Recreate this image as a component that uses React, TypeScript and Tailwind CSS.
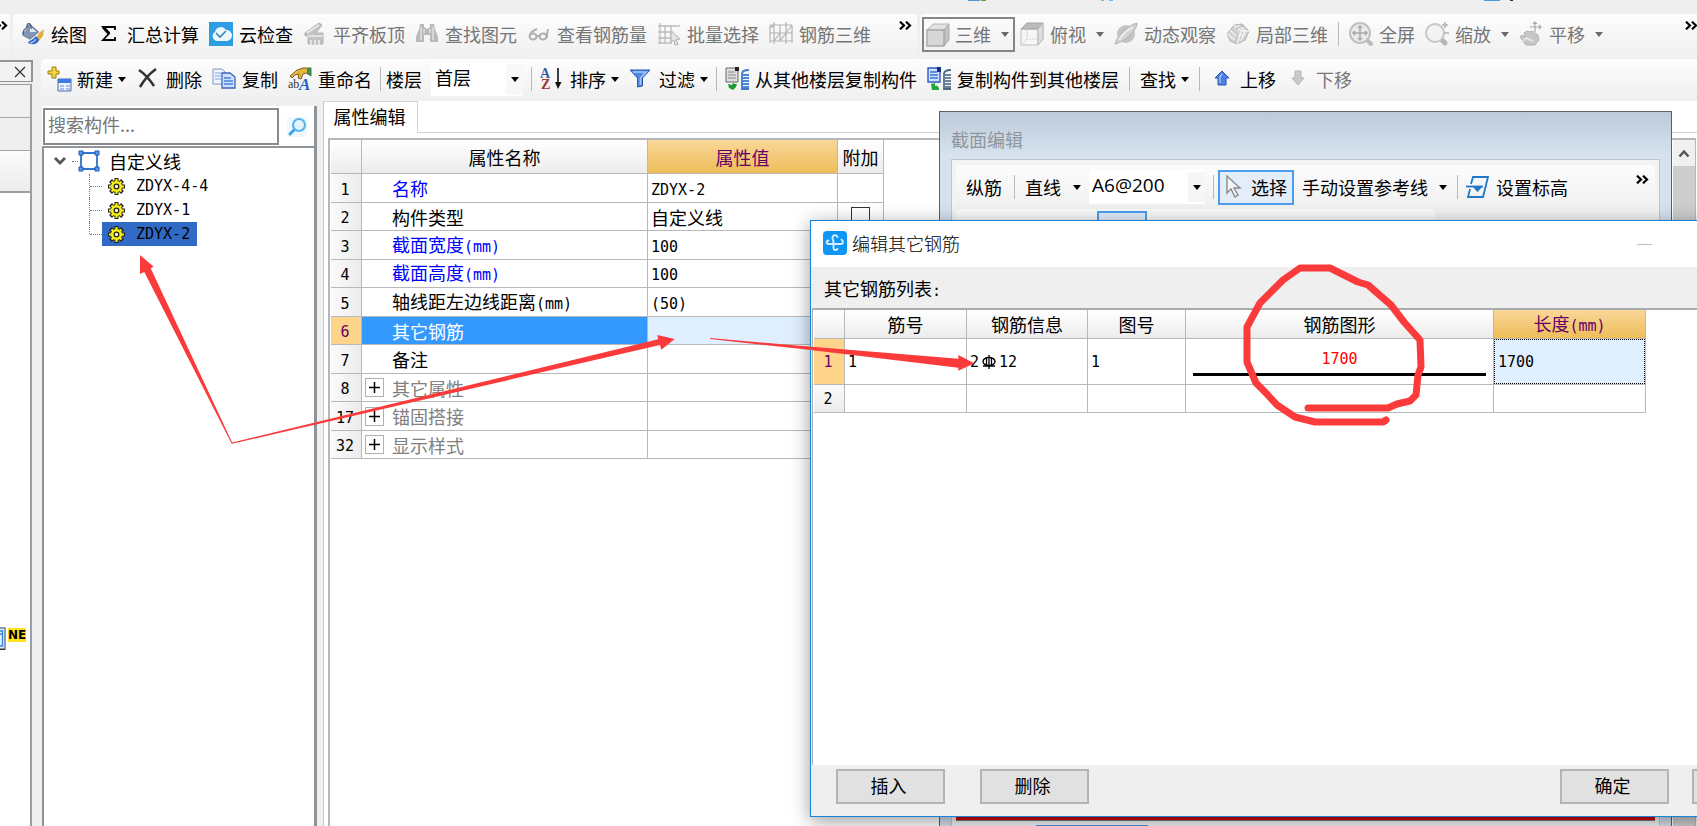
import React from "react";

const Svg = ({ w = 24, h = 24, children }: { w?: number; h?: number; children: React.ReactNode }) => (
  <svg width={w} height={h} viewBox={`0 0 ${w} ${h}`} className="shrink-0 overflow-visible" aria-hidden="true" fill="none">
    {children}
  </svg>
);

const Arrow = ({ dim = false }: { dim?: boolean }) => (
  <svg width="8" height="5" viewBox="0 0 8 5" className="shrink-0" aria-hidden="true">
    <path d="M0 0h8L4 5z" fill={dim ? "#6a6a6a" : "#000"} />
  </svg>
);

const More = () => (
  <svg width="13" height="9" viewBox="0 0 13 9" className="shrink-0" aria-hidden="true">
    <path d="M1 .7 5 4.5 1 8.3M7 .7l4 3.8-4 3.8" stroke="#000" strokeWidth="2.2" fill="none" />
  </svg>
);

const icons = {
  paint: (
    <Svg>
      <path d="M3 8 9 3l8 7-8 7-7-4z" fill="#dfe6ee" stroke="#5f7796" strokeWidth="1.4" />
      <path d="M9 3v7l8 0-8 7-7-5z" fill="#7f96b4" />
      <path d="M6 6c-1-6 5-6 4 1" stroke="#44597a" strokeWidth="1.3" />
      <path d="M3 8c-3 3-1 6 0 4z" fill="#3b62c4" />
      <path d="m23 7-5 4-3 5 3 3 4-5z" fill="#e0ac4c" />
      <path d="m15 14-3 3c-2 2-4 1-5 4 4 2 9 2 11-3z" fill="#2f5fc8" />
      <path d="M9 21c4-1 5-2 6-4" stroke="#a9c4f5" strokeWidth="1.4" />
    </Svg>
  ),
  sigma: (
    <Svg>
      <path d="M18 8V5H6l6 6.5L6 18h12v-3" stroke="#000" strokeWidth="1.8" />
      <path d="m6 5 6 6.5" stroke="#000" strokeWidth="3" />
    </Svg>
  ),
  cloud: (
    <Svg>
      <path d="M0 0h24v24H0z" fill="#2d9fe0" />
      <path d="M7 19a5 5 0 0 1-1-9 6 6 0 0 1 11-2 5.5 5.5 0 0 1 1 11z" fill="#eef7fd" />
      <path d="m7 11 4 4 6-6" stroke="#3c86ba" strokeWidth="1.7" />
    </Svg>
  ),
  slab: (
    <Svg>
      <path d="m2 11 14-10 3 2-6 8h7v11H5V13L2 14z" fill="#c2c2c2" stroke="#b2b2b2" />
      <path d="m4 11 12-8M8 23v-5M12 23v-5M16 23v-5M5 14h15" stroke="#ededed" strokeWidth="1.6" />
    </Svg>
  ),
  binoc: (
    <Svg>
      <path d="M5 2h4v3l3 2 3-2V2h4l1 5 3 8v5h-8v-7h-6v7H1v-5l3-8z" fill="#b9b9b9" />
      <path d="M6 5v13M18 5v13M9 7v4M15 7v4" stroke="#e6e6e6" strokeWidth="1.4" />
    </Svg>
  ),
  glasses: (
    <Svg>
      <ellipse cx="6" cy="14.500" rx="3.500" ry="3" stroke="#b0b0b0" strokeWidth="2" />
      <ellipse cx="16" cy="14.500" rx="3.500" ry="3" stroke="#b0b0b0" strokeWidth="2" />
      <path d="M3 13c1-3 4-5 7-6M10 14h2M20 16c0-3 0-6 1-9" stroke="#b0b0b0" strokeWidth="2" />
    </Svg>
  ),
  batch: (
    <Svg>
      <path d="M1 4h22M1 10h15M1 16h13M1 21h13M3 1v21M8 3v19M14 3v19" stroke="#bcbcbc" strokeWidth="1.3" />
      <path d="m14 9 9 8-4 .5 2 5-3 .5-1-5-3 2z" fill="#e6e6e6" stroke="#b0b0b0" />
    </Svg>
  ),
  rebar3d: (
    <Svg>
      <path d="M5 0v22M11 3v16M17 0v22M23 3v18M1 3h22M1 11h22M1 19h22M1 3v18M5 3 1 6M11 11l-6 8M23 3l-6 8M17 11l-6 8" stroke="#b4b4b4" strokeWidth="1.2" />
    </Svg>
  ),
  cube: (
    <Svg>
      <path d="m1 7 6-6h16l-5 6z" fill="#e2e2e2" stroke="#b6b6b6" />
      <path d="m18 7 5-6v16l-5 6z" fill="#c2c2c2" stroke="#b0b0b0" />
      <path d="M1 7h17v16H1z" fill="#d6d6d6" stroke="#a8a8a8" strokeWidth="1.4" />
    </Svg>
  ),
  topCube: (
    <Svg>
      <path d="M1 7h17v16H1zM18 23l5-6V1" fill="#f6f6f6" stroke="#bdbdbd" />
      <path d="m1 7 6-6h16l-5 6z" fill="#bcbcbc" stroke="#a4a4a4" />
      <path d="M7 7v10h11M7 17l-6 6" stroke="#d2d2d2" strokeDasharray="2 1" />
      <path d="m18 7 5-6v16l-5 6z" fill="#dedede" stroke="#b8b8b8" />
    </Svg>
  ),
  orbit: (
    <Svg>
      <circle cx="12" cy="12" r="9" fill="#c4c4c4" />
      <path d="M1 22C2 16 12 4 23 1c1 5-10 18-22 21z" fill="#d3d3d3" stroke="#b0b0b0" />
      <path d="M5 18C8 13 13 8 19 5" stroke="#f0f0f0" strokeWidth="1.5" />
    </Svg>
  ),
  localCube: (
    <Svg>
      <path d="m1 12 7-9 8-1 7 7-4 9-8 4-7-3z" fill="#d4d4d4" stroke="#b0b0b0" />
      <path d="m8 3 7 6 8 0M15 9l-4 13M4 8l7 6 8-2M12 3l7 6-4 10M1 12l8 6" stroke="#f2f2f2" strokeWidth="1.3" />
      <path d="m5 7 7 6-3 8M10 7l8-4" stroke="#b6b6b6" />
    </Svg>
  ),
  full: (
    <Svg>
      <path d="m18 18 4 4" stroke="#bdbdbd" strokeWidth="4" strokeLinecap="round" />
      <circle cx="11" cy="11" r="10" fill="#eaeaea" stroke="#c0c0c0" strokeWidth="2" />
      <path d="M11 4v14M4 11h14M9 6l2-2 2 2M9 16l2 2 2-2M6 9l-2 2 2 2M16 9l2 2-2 2" stroke="#a9a9a9" strokeWidth="1.5" />
    </Svg>
  ),
  zoom: (
    <Svg>
      <path d="m16 17 4 4" stroke="#b6b6b6" strokeWidth="5" strokeLinecap="round" />
      <circle cx="10" cy="11" r="9" fill="#f3f3f3" stroke="#c6c6c6" strokeWidth="2" />
      <path d="M17 3h6M20 0v6M19 11h5" stroke="#b2b2b2" strokeWidth="1.6" />
    </Svg>
  ),
  pan: (
    <Svg>
      <path d="M1 15c1-3 4-1 5 0l-1-4 3-2 3 1 2-1 3 2 3 2 1 5-4 5H7l-3-4z" fill="#c6c6c6" stroke="#b2b2b2" />
      <path d="m2 21 5-5 7 3" stroke="#ececec" strokeWidth="1.4" />
      <path d="M16 0v10M11 5h11M14 2l2-2 2 2M20 3l2 2-2 2" stroke="#a9a9a9" strokeWidth="1.2" />
    </Svg>
  ),
  add: (
    <Svg>
      <path d="M5 0h4v4h3v3H9v4H5V7H1V4h4z" fill="#f4d63c" stroke="#9c7a14" />
      <path d="M11 12h13v12H11z" fill="#eaf3ff" stroke="#4a6da8" />
      <path d="M11 12h13v4H11z" fill="#3f7be0" />
      <path d="M13 19h4M19 19h4M13 22h4M19 22h4" stroke="#8fb0e0" strokeWidth="1.4" />
    </Svg>
  ),
  remove: (
    <Svg>
      <path d="M3 3c6 4 11 10 15 16M20 2C13 7 8 13 4 20" stroke="#333" strokeWidth="2.600" />
    </Svg>
  ),
  copy: (
    <Svg>
      <path d="M1 2h9l3 3v12H1z" fill="#eef4ff" stroke="#7d9ac8" />
      <path d="M3 6h6M3 9h6M3 12h6" stroke="#7fa4dd" />
      <path d="M10 6h8l5 4v11H10z" fill="#cfe0fb" stroke="#3b66b5" strokeWidth="1.3" />
      <path d="M12 11h7M12 14h9M12 17h9" stroke="#4a7fd6" strokeWidth="1.3" />
    </Svg>
  ),
  rename: (
    <Svg>
      <path d="m2 9 7-6 6-2 8 0v8l-5-3-3 1-2 5-3-1 1-4-4 1-3 3z" fill="#e3b53c" stroke="#7a6122" />
      <path d="M19 1h4v8l-4-3z" fill="#3a8f4c" />
      <text x="0" y="21" fontSize="12" fontFamily="Liberation Serif" fill="#333">ab</text>
      <text x="11" y="23" fontSize="17" fontWeight="700" fontStyle="italic" fontFamily="Liberation Serif" fill="#2c62c6">A</text>
    </Svg>
  ),
  sort: (
    <Svg>
      <text x="0" y="11" fontSize="14" fontWeight="700" fontFamily="Liberation Serif" fill="#3c5f9e">A</text>
      <text x="1" y="22" fontSize="14" fontWeight="700" fontFamily="Liberation Serif" fill="#a03236">Z</text>
      <path d="M18 1v18" stroke="#111" strokeWidth="1.6" />
      <path d="M15 15h6.500L18 22z" fill="#111" />
    </Svg>
  ),
  filter: (
    <Svg>
      <path d="M1 3h20l-7.500 8v8l-5 1V11z" fill="#4f86e0" stroke="#2a56b0" />
      <path d="M4 5h13l-5.500 6v7" stroke="#a9c9fa" strokeWidth="1.6" />
    </Svg>
  ),
  copyFrom: (
    <Svg>
      <path d="M1 1h10l2 2v12H1z" fill="#dedede" stroke="#666" />
      <path d="M10 0h4v4h-4z" fill="#222" />
      <path d="M3 5h7M3 8h8M3 11h8" stroke="#8a8a8a" />
      <path d="m3 17 4 1 1-2 2 1 2 0-1 3-3 3-4-2z" fill="#1f9a34" />
      <path d="M24 3c-5 0-7 1-7 4v15h7" stroke="#3f78c8" strokeWidth="1.800" />
      <path d="M16 8h8M16 11h8M16 14h8M16 17h8M16 20h8" stroke="#4b86d8" strokeWidth="2" />
    </Svg>
  ),
  copyTo: (
    <Svg>
      <path d="M1 1h10l2 2v12H1z" fill="#cfdffb" stroke="#2c5dc0" strokeWidth="1.4" />
      <path d="M10 0h4v5h-4z" fill="#14307c" />
      <path d="M3 5h7M3 8h8M3 11h8" stroke="#3f74d8" strokeWidth="1.3" />
      <path d="m4 17 4-1v3c3-1 4 1 4 4H5z" fill="#1fa83c" />
      <path d="M24 3c-5 0-7 1-7 4v15h7" stroke="#51677e" strokeWidth="1.800" />
      <path d="M16 8h8M16 11h8M16 14h8M16 17h8M16 20h8" stroke="#6b8197" strokeWidth="2" />
    </Svg>
  ),
  up: (
    <Svg>
      <path d="m12 4 7 7h-3v7H8v-7H5z" fill="#4d7fe2" stroke="#2d55b4" />
      <path d="M10 16v-6l2-3" stroke="#a4c3fa" strokeWidth="1.4" />
    </Svg>
  ),
  down: (
    <Svg>
      <path d="m12 18 6-7h-3V4H9v7H6z" fill="#c9c9c9" stroke="#b5b5b5" />
    </Svg>
  ),
  elevation: (
    <Svg>
      <path d="M5 9 7 2h15l-5 20H2l2-8" stroke="#1f78c8" strokeWidth="1.800" />
      <path d="M0 11.500h17" stroke="#1f78c8" strokeWidth="1.800" />
      <path d="M6 11h11l-5.500 6z" fill="#1f78c8" />
    </Svg>
  ),
  cursor: (
    <Svg w={18}>
      <path d="M2 1v17l4-4 4 8 3-2-4-7h6z" fill="#f4f6f9" stroke="#8a8a8a" strokeWidth="1.4" />
    </Svg>
  ),
};

type ToolProps = { icon?: React.ReactNode; label: string; dim?: boolean; menu?: boolean };
const Tool = ({ icon, label, dim = false, menu = false }: ToolProps) => (
  <button
    type="button"
    disabled={dim}
    className={`flex shrink-0 items-center whitespace-nowrap text-[18px] leading-6 ${dim ? "text-[#757575]" : "text-black"}`}
  >
    {icon}
    <span className={icon ? "ml-[6px]" : ""}>{label}</span>
    {menu && <span className={dim ? "ml-[10px]" : "ml-[5px]"}><Arrow dim={dim} /></span>}
  </button>
);

const Sep = ({ tight = false }: { tight?: boolean }) => (
  <span className={`h-6 w-px shrink-0 bg-[#b9b9b9] ${tight ? "-mx-[2px]" : ""}`} />
);

/* Latin runs sit on a half-width grid beside full-width characters. */
const Mixed = ({ text }: { text: string }) => (
  <>
    {text.split(/([\x20-\x7e]+)/).filter(Boolean).map((part, i) =>
      /^[\x20-\x7e]/.test(part) ? (
        <span key={i} className="font-['DejaVu_Sans_Mono',monospace] text-[15px]">{part}</span>
      ) : (
        <span key={i}>{part}</span>
      ),
    )}
  </>
);

const Gear = () => (
  <Svg w={17} h={17}>
    <path d="M8.500 0v17M0 8.500h17M2.500 2.500l12 12M14.500 2.500l-12 12" stroke="#222" strokeWidth="4" />
    <circle cx="8.500" cy="8.500" r="6" fill="#f5ee1c" stroke="#3a3a10" />
    <path d="M8.500 1v15M1 8.500h15M3.500 3.500l10 10M13.500 3.500l-10 10" stroke="#f5ee1c" strokeWidth="2" />
    <circle cx="8.500" cy="8.500" r="2.300" fill="#fdfdd0" stroke="#222" strokeWidth="1.300" />
  </Svg>
);

const properties = [
  { no: "1", name: "名称", value: "ZDYX-2", tone: "blue" },
  { no: "2", name: "构件类型", value: "自定义线", tone: "black", check: true },
  { no: "3", name: "截面宽度(mm)", value: "100", tone: "blue" },
  { no: "4", name: "截面高度(mm)", value: "100", tone: "blue" },
  { no: "5", name: "轴线距左边线距离(mm)", value: "(50)", tone: "black" },
  { no: "6", name: "其它钢筋", value: "", tone: "selected" },
  { no: "7", name: "备注", value: "", tone: "black" },
  { no: "8", name: "其它属性", value: "", tone: "group" },
  { no: "17", name: "锚固搭接", value: "", tone: "group" },
  { no: "32", name: "显示样式", value: "", tone: "group" },
];

const tones: Record<string, string> = {
  blue: "text-[#0000ff]",
  black: "text-black",
  selected: "bg-[#3399ff] text-white",
  group: "text-[#808080]",
};

const headCell = "border-r border-b border-[#b8b8b8] bg-linear-to-b from-white to-[#ececec] p-0 font-normal";
const goldCell = "border-r border-b border-[#b8b8b8] bg-linear-to-b from-[#f9d797] to-[#eebd58] p-0 font-normal text-[#660066]";
const cell = "border-r border-b border-[#b8b8b8] p-0";

function LeftDock() {
  return (
    <aside className="flex w-[33px] shrink-0 flex-col pt-px">
      <div className="flex h-[22px] items-center justify-end border-t-2 border-r-2 border-b border-[#949494] bg-[#f2f2f2] pr-[4px]">
        <button type="button" aria-label="关闭" className="flex">
          <Svg w={14} h={14}><path d="m2 2 10 10M12 2 2 12" stroke="#333" strokeWidth="1.2" /></Svg>
        </button>
      </div>
      <div className="mt-[2px] mr-[1px] flex flex-1 flex-col border-t border-r-2 border-[#9a9fa5]">
        <div className="h-[33px] border-b border-[#a8a8a8] bg-[#f0f0f0]" />
        <div className="h-[33px] border-b border-[#a8a8a8] bg-[#efefef]" />
        <div className="h-[42px] border-b-2 border-[#9a9fa5] bg-linear-to-b from-[#fbfbfb] to-[#ececec]" />
        <div className="flex flex-1 items-start gap-[2px] overflow-hidden bg-white pt-[434px]">
          <svg width="6" height="24" viewBox="0 0 6 24" className="shrink-0" aria-hidden="true">
            <path d="M0 1h5v21H0" fill="#e4ecf6" stroke="#6a7f98" strokeWidth="1.500" />
            <path d="M0 4h2.500v15H0M0 7h2" fill="none" stroke="#2f86e0" strokeWidth="1.300" />
            <path d="M0 22.500h5" stroke="#333" />
          </svg>
          <span className="mt-px bg-[#ffe21a] font-['DejaVu_Sans',sans-serif] text-[12px] leading-[14px] font-bold text-black">NE</span>
        </div>
      </div>
    </aside>
  );
}

function TreePanel() {
  return (
    <section className="mt-[5px] flex w-[275px] shrink-0 flex-col border-r-[3px] border-[#8f9499] bg-white">
      <div className="flex h-[40px] items-start bg-white pt-[2px] pl-px">
        <input
          aria-label="搜索构件"
          placeholder="搜索构件..."
          className="h-[37px] w-[236px] border-2 border-[#8a8a8a] bg-white px-[3px] pb-[6px] text-[18px] outline-none placeholder:text-[#777]"
        />
        <button type="button" aria-label="搜索" className="ml-[8px] mt-[9px] flex">
          <Svg w={22} h={22}>
            <path d="M0 0h20v20H0z" fill="#eef7fd" />
            <path d="m8 12-5 5" stroke="#3fa0e4" strokeWidth="3" strokeLinecap="round" />
            <circle cx="12" cy="8" r="6" fill="#e2f3fd" stroke="#5ab2ec" strokeWidth="2.200" />
          </Svg>
        </button>
      </div>
      <div className="flex-1 border-t-2 border-l-2 border-[#8f9499]">
        <ul className="text-[18px]">
          <li>
            <div className="flex h-[26px] items-center pl-[9px]">
              <Svg w={14} h={10}><path d="m2 2 5 5 5-5" stroke="#555" strokeWidth="2.800" /></Svg>
              <span className="ml-[5px] w-[6px] border-t border-dotted border-[#777]" />
              <Svg w={22} h={22}>
                <path d="M3 3h16v16H3z" stroke="#2f74d0" strokeWidth="1.800" />
                <path d="M1 1h4v4H1zM17 1h4v4h-4zM1 17h4v4H1zM17 17h4v4h-4z" fill="#5a9bea" stroke="#1b57b4" />
              </Svg>
              <span className="ml-[9px]">自定义线</span>
            </div>
            <ul>
              {["ZDYX-4-4", "ZDYX-1", "ZDYX-2"].map((name, i) => (
                <li key={name} className="flex h-6 pl-[45px]">
                  <span className={`w-px border-l border-dotted border-[#777] ${i === 2 ? "h-3" : ""}`} />
                  <span className="mt-3 w-[12px] border-t border-dotted border-[#777]" />
                  <button
                    type="button"
                    className={`flex h-6 items-center gap-[11px] pr-[7px] pl-[6px] font-['DejaVu_Sans_Mono',monospace] text-[15px] ${i === 2 ? "bg-[#316ac5]" : ""}`}
                  >
                    <Gear />
                    {name}
                  </button>
                </li>
              ))}
            </ul>
          </li>
        </ul>
      </div>
    </section>
  );
}

function PropertyPanel() {
  return (
    <section className="ml-[6px] flex min-w-0 flex-1 flex-col border-l border-[#c8c8c8] bg-white">
      <div className="flex h-8 items-stretch" role="tablist">
        <button type="button" role="tab" aria-selected="true" className="w-[94px] shrink-0 border-t border-r border-[#d4d4d4] bg-white pr-[2px] pb-[4px] text-center text-[18px] leading-6">
          属性编辑
        </button>
        <span className="flex-1 border-b border-[#cfcfcf]" />
      </div>
      <div className="mt-[5px] mr-[1px] ml-[4px] flex flex-1 items-start justify-between border-t-2 border-r border-l-2 border-[#b4b8bc] bg-white">
        <table className="ml-[1px] w-[553px] table-fixed border-separate border-spacing-0 text-[18px] leading-5">
          <colgroup>
            <col className="w-[31px]" />
            <col className="w-[286px]" />
            <col className="w-[190px]" />
            <col className="w-[46px]" />
          </colgroup>
          <thead>
            <tr className="h-[34px]">
              <th className={headCell} aria-label="序号" />
              <th className={headCell}>属性名称</th>
              <th className={goldCell}>属性值</th>
              <th className={headCell}>附加</th>
            </tr>
          </thead>
          <tbody>
            {properties.map((p) => (
              <tr key={p.no} className="odd:h-[29px] even:h-[28px]">
                <td className={`border-r border-b border-[#b8b8b8] p-0 pr-[2px] text-center ${p.tone === "selected" ? "bg-[#fdd48a] text-[#660066]" : "bg-linear-to-r from-[#fafafa] to-[#ececec]"}`}>
                  <Mixed text={p.no} />
                </td>
                <td className={`${cell} ${tones[p.tone]}`}>
                  <div className="flex items-center pl-[3px]">
                    <span className="flex w-[27px]">
                      {p.tone === "group" && (
                        <button type="button" aria-label="展开" className="flex border border-[#b0b0b0] bg-white">
                          <Svg w={17} h={17}><path d="M8.500 3v11M3 8.500h11" stroke="#000" strokeWidth="1.500" /></Svg>
                        </button>
                      )}
                    </span>
                    <span className="whitespace-nowrap"><Mixed text={p.name} /></span>
                  </div>
                </td>
                <td className={`${cell} pl-[3px] ${p.tone === "selected" ? "bg-[#e0efff]" : ""}`}>
                  <Mixed text={p.value} />
                </td>
                <td className={`${cell} text-center`}>
                  {p.check && <input type="checkbox" aria-label="附加" className="mx-auto block size-[19px] appearance-none border-[1px] border-[#333] bg-white" />}
                </td>
              </tr>
            ))}
          </tbody>
        </table>
        <div className="w-[22px] self-stretch bg-[#cdcdcd]">
          <div className="flex h-[26px] items-center justify-center bg-[#f0f0f0]">
            <Svg w={12} h={9}><path d="m1.500 7.500 4.500-5 4.500 5" stroke="#555" strokeWidth="2.500" /></Svg>
          </div>
        </div>
      </div>
    </section>
  );
}

function SectionWindow() {
  return (
    <section className="absolute top-[111px] right-[25px] bottom-0 left-[939px] flex flex-col border border-b-0 border-[#5c5f63] bg-[#d6e1ef]">
      <h2 className="flex h-[47px] items-center bg-linear-to-b from-[#bccad9] to-[#d8e4f0] pt-[7px] pl-[11px] text-[18px] text-[#8f959c]">截面编辑</h2>
      <div className="mx-[11px] flex flex-1 flex-col border border-b-0 border-[#bfc5cb] bg-[#f3f3f3] px-[4px] pt-[5px]">
        <div className="flex h-[44px] items-center gap-[12px] rounded-t bg-linear-to-b from-[#fcfcfc] to-[#f0f0f0] pl-[10px]">
          <Tool label="纵筋" />
          <Sep />
          <button type="button" className="-ml-[2px] flex shrink-0 items-center gap-[12px] text-[18px] leading-6">直线<Arrow /></button>
          <div className="relative -ml-[4px] shrink-0">
            <select aria-label="钢筋规格" className="h-[34px] w-[116px] appearance-none bg-white px-[3px] pb-[3px] font-['Open_Sans','Noto_Sans_CJK_SC',sans-serif] text-[19px] text-black outline-none">
              <option>A6@200</option>
            </select>
            <span className="pointer-events-none absolute top-[2px] right-0 flex h-[30px] w-[17px] items-center justify-center bg-[#f6f6f6]"><Arrow /></span>
          </div>
          <span className="-ml-[4px] flex"><Sep /></span>
          <button type="button" className="-ml-[8px] flex h-[35px] w-[76px] shrink-0 items-center gap-[8px] border-2 border-[#4a9ff0] bg-[#e3eefa] pl-[5px] text-[18px] leading-6">
            {icons.cursor}选择
          </button>
          <button type="button" className="-ml-[4px] flex shrink-0 items-center gap-[11px] text-[18px] leading-6">手动设置参考线<Arrow /></button>
          <span className="-ml-[2px] flex"><Sep /></span>
          <span className="-ml-[4px] flex"><Tool icon={icons.elevation} label="设置标高" /></span>
          <span className="mt-[-16px] mr-[6px] ml-auto"><More /></span>
        </div>
        <div className="mr-[220px] h-[40px] rounded-t bg-[#fafafa] pt-[2px] pl-[141px]">
          <div className="h-[35px] w-[50px] border-2 border-[#4a9ff0] bg-[#e3eefa]" />
        </div>
        <div className="mt-auto mb-[4px] h-[7px] border-b border-[#777] bg-[#d40000]" />
        <div className="h-px pl-[80px]"><div className="h-px w-[112px] bg-[#4a90e0]" /></div>
      </div>
    </section>
  );
}

function RebarDialog() {
  const num = "font-['DejaVu_Sans_Mono',monospace] text-[15px]";
  const button = "h-[35px] w-[109px] shrink-0 border-2 border-[#b4b4b4] bg-[#e1e1e1] pr-[4px] pb-[3px] text-[18px] leading-6";
  return (
    <section className="absolute top-[220px] -right-[118px] left-[810px] flex h-[597px] flex-col border border-[#1883d7] bg-[#efefef] shadow-[0_4px_18px_rgba(0,0,0,0.4)]">
      <header className="flex h-[46px] shrink-0 items-center bg-white pb-[2px] pl-[12px]">
        <Svg>
          <rect width="24" height="24" rx="4" fill="#0f96f5" />
          <path d="M14.500 6c-1-3-5-2-5 1 0 2 1 2 1 4v6c0 2 2 3 4 1M5.500 9.500c-3 1-2 3.500 0 3.500h12c3 0 3-3 1-4.500" stroke="#d6eeff" strokeWidth="1.900" strokeLinecap="round" />
        </Svg>
        <h2 className="ml-[5px] text-[18px] leading-6 font-light">编辑其它钢筋</h2>
        <button type="button" aria-label="最小化" className="mt-[2px] mr-[162px] ml-auto h-4 w-[15px]">
          <span className="block h-px bg-[#bdbdbd]" />
        </button>
      </header>
      <p className="h-[41px] shrink-0 pt-[9px] pl-[13px] text-[18px] leading-6">其它钢筋列表<Mixed text=":" /></p>
      <div className="ml-px flex-1 border-t-2 border-l border-[#a8abb0] bg-white pl-px">
        <table className="w-[832px] table-fixed border-separate border-spacing-0 text-[18px] leading-5">
          <colgroup>
            <col className="w-[31px]" />
            <col className="w-[122px]" />
            <col className="w-[121px]" />
            <col className="w-[98px]" />
            <col className="w-[308px]" />
            <col className="w-[152px]" />
          </colgroup>
          <thead>
            <tr className="h-[29px]">
              <th className={headCell} aria-label="序号" />
              <th className={headCell}>筋号</th>
              <th className={headCell}>钢筋信息</th>
              <th className={headCell}>图号</th>
              <th className={headCell}>钢筋图形</th>
              <th className={goldCell}><Mixed text="长度(mm)" /></th>
            </tr>
          </thead>
          <tbody>
            <tr className="h-[46px]">
              <td className={`border-r border-b border-[#b8b8b8] bg-[#fdd48a] p-0 pr-[2px] text-center text-[#660066] ${num}`}>1</td>
              <td className={`${cell} ${num} pl-[3px]`}>1</td>
              <td className={`${cell} ${num} pl-[3px]`}>
                <span className="flex items-center gap-[3px]">
                  2
                  <Svg w={14} h={14}>
                    <ellipse cx="7" cy="6.500" rx="6" ry="4" stroke="#000" strokeWidth="1.400" />
                    <path d="M7 0v14M4.500 3v8M9.500 3v8M1 11h12" stroke="#000" strokeWidth="1.300" />
                  </Svg>
                  12
                </span>
              </td>
              <td className={`${cell} ${num} pl-[3px]`}>1</td>
              <td className={`${cell} ${num} px-[7px] pt-[2px] text-center text-[#ff0000]`}>
                <span className="block border-b-[3px] border-black pb-[4px]">1700</span>
              </td>
              <td className={`${cell} ${num}`}>
                <div className="flex h-[45px] items-center border border-dotted border-black bg-[#e0efff] pl-[3px]">1700</div>
              </td>
            </tr>
            <tr className="h-[28px]">
              <td className={`border-r border-b border-[#b8b8b8] bg-linear-to-b from-[#fafafa] to-[#ececec] p-0 pr-[2px] text-center ${num}`}>2</td>
              <td className={cell} />
              <td className={cell} />
              <td className={cell} />
              <td className={cell} />
              <td className={cell} />
            </tr>
          </tbody>
        </table>
      </div>
      <footer className="flex h-[51px] shrink-0 items-start pt-[4px] pr-[13px] pl-[25px]">
        <button type="button" className={button}>插入</button>
        <button type="button" className={`${button} ml-[35px]`}>删除</button>
        <button type="button" className={`${button} ml-auto`}>确定</button>
        <button type="button" aria-label="取消" className={`${button} ml-[23px]`} />
      </footer>
    </section>
  );
}

function Markup() {
  return (
    <svg className="pointer-events-none absolute inset-0 h-full w-full" aria-hidden="true">
      <g fill="#fb3b3b">
        <path d="M140 255 153.700 266.700 150.700 268.200 232.500 443.300 231.500 443.500 144.300 272 140 274z" />
        <path d="M674.700 339 657.300 335 658.200 339.300 232 442.500v1.300L660 345l1.300 4.700z" />
        <path d="M974.300 363.300 958.300 355v3.700L800 345.800l-90-7.800v1l90 9.800 158.300 19v3z" />
      </g>
      <path
        d="M1308 408h80l9-4 13-3 6-6 2-20 3-8-1-27-16-18-13-17-23-20-10-3-28-14h-30l-17 12-23 23-13 24v35l9 21 10 10 11 12 18 12 20 5h68l3-2"
        fill="none" stroke="#fb3b3b" strokeWidth="7" strokeLinecap="round" strokeLinejoin="round"
      />
    </svg>
  );
}

export default function App() {
  return (
    <div className="relative flex min-h-screen flex-col overflow-hidden bg-[#efefef] font-['Noto_Sans_CJK_SC',sans-serif] text-black">
      <div className="h-[14px] shrink-0 pl-[967px]">
        <svg width="560" height="2" viewBox="0 0 560 2" className="block" aria-hidden="true">
          <path d="M1 0h12M517 0h16" stroke="#4a98d4" strokeWidth="2" />
          <path d="M14 0h5" stroke="#62a33a" strokeWidth="2" />
          <path d="M134 0h3M142 0h4" stroke="#6ab8ec" strokeWidth="2" />
          <path d="M543 0h3" stroke="#333" strokeWidth="2" />
        </svg>
      </div>

      <nav className="flex h-[45px] shrink-0 gap-[3px]">
        <div className="flex w-[10px] shrink-0 justify-end bg-linear-to-b from-[#fdfdfd] to-[#efefef] pt-[7px] pr-[2px]"><More /></div>
        <div className="flex w-[904px] shrink-0 items-center gap-[10px] rounded-l bg-linear-to-b from-[#fdfdfd] to-[#efefef] pr-[5px] pb-[5px] pl-[8px]">
          <Tool icon={icons.paint} label="绘图" />
          <Tool icon={icons.sigma} label="汇总计算" />
          <Tool icon={icons.cloud} label="云检查" />
          <Tool icon={icons.slab} label="平齐板顶" dim />
          <Tool icon={icons.binoc} label="查找图元" dim />
          <Tool icon={icons.glasses} label="查看钢筋量" dim />
          <Tool icon={icons.batch} label="批量选择" dim />
          <Tool icon={icons.rebar3d} label="钢筋三维" dim />
          <span className="-mt-[18px] ml-auto"><More /></span>
        </div>
        <div className="flex min-w-0 flex-1 items-center gap-[10px] rounded-l bg-linear-to-b from-[#fdfdfd] to-[#efefef] pb-[5px] pl-[2px]">
          <button type="button" disabled className="-mr-[5px] mt-px flex h-[35px] w-[93px] shrink-0 items-center gap-[5px] border-2 border-[#858585] pl-[2px] text-[18px] leading-6 text-[#757575]">
            {icons.cube}
            <span className="-mt-[2px]">三维</span>
            <span className="ml-[5px]"><Arrow dim /></span>
          </button>
          <Tool icon={icons.topCube} label="俯视" dim menu />
          <Tool icon={icons.orbit} label="动态观察" dim />
          <Tool icon={icons.localCube} label="局部三维" dim />
          <Sep />
          <Tool icon={icons.full} label="全屏" dim />
          <Tool icon={icons.zoom} label="缩放" dim menu />
          <Tool icon={icons.pan} label="平移" dim menu />
          <span className="-mt-[18px] -mr-px ml-auto"><More /></span>
        </div>
      </nav>

      <div className="flex flex-1">
        <LeftDock />
        <div className="ml-[8px] flex min-w-0 flex-1 flex-col">
          <nav className="flex h-[42px] shrink-0 items-center gap-[10px] rounded-tl bg-linear-to-b from-[#fdfdfd] to-[#efefef] pb-[2px] pl-[6px]">
            <Tool icon={icons.add} label="新建" menu />
            <Tool icon={icons.remove} label="删除" />
            <Tool icon={icons.copy} label="复制" />
            <Tool icon={icons.rename} label="重命名" />
            <Sep tight />
            <div className="-ml-[3px] flex shrink-0 items-center gap-[9px]">
              <label htmlFor="floor" className="text-[18px] leading-6">楼层</label>
              <div className="relative">
                <select id="floor" className="block h-[33px] w-[92px] appearance-none bg-white px-[4px] pb-[3px] text-[18px] text-black outline-none">
                  <option>首层</option>
                </select>
                <span className="pointer-events-none absolute top-px right-0 flex h-[31px] w-[17px] items-center justify-center bg-[#f8f8f8]"><Arrow /></span>
              </div>
            </div>
            <Sep tight />
            <Tool icon={icons.sort} label="排序" menu />
            <Tool icon={icons.filter} label="过滤" menu />
            <Sep tight />
            <Tool icon={icons.copyFrom} label="从其他楼层复制构件" />
            <Tool icon={icons.copyTo} label="复制构件到其他楼层" />
            <Sep />
            <Tool label="查找" menu />
            <Sep />
            <Tool icon={icons.up} label="上移" />
            <Tool icon={icons.down} label="下移" dim />
          </nav>
          <div className="flex flex-1 pl-px">
            <TreePanel />
            <PropertyPanel />
          </div>
        </div>
      </div>

      <SectionWindow />
      <RebarDialog />
      <Markup />
    </div>
  );
}
